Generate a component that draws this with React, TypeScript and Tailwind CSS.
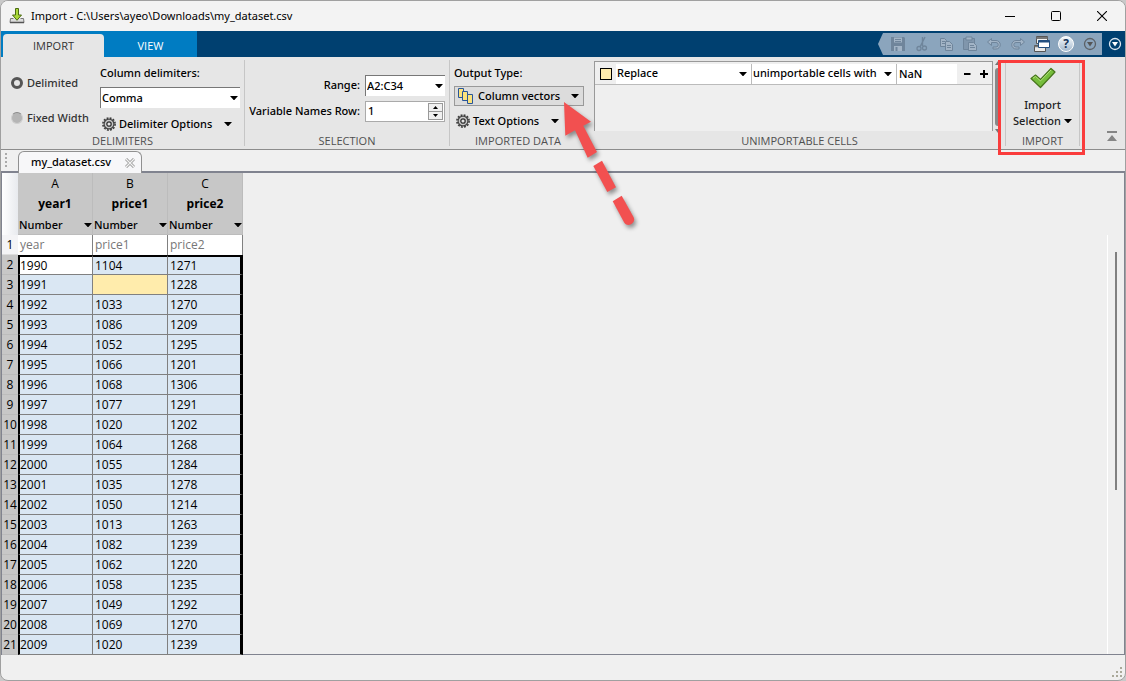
import React from "react";

const ROWS: [string, string, string][] = [
  ["1990", "1104", "1271"],
  ["1991", "", "1228"],
  ["1992", "1033", "1270"],
  ["1993", "1086", "1209"],
  ["1994", "1052", "1295"],
  ["1995", "1066", "1201"],
  ["1996", "1068", "1306"],
  ["1997", "1077", "1291"],
  ["1998", "1020", "1202"],
  ["1999", "1064", "1268"],
  ["2000", "1055", "1284"],
  ["2001", "1035", "1278"],
  ["2002", "1050", "1214"],
  ["2003", "1013", "1263"],
  ["2004", "1082", "1239"],
  ["2005", "1062", "1220"],
  ["2006", "1058", "1235"],
  ["2007", "1049", "1292"],
  ["2008", "1069", "1270"],
  ["2009", "1020", "1239"],
];

const COLUMNS = [
  { letter: "A", name: "year1", source: "year" },
  { letter: "B", name: "price1", source: "price1" },
  { letter: "C", name: "price2", source: "price2" },
];

function Caret({ className = "" }: { className?: string }) {
  return (
    <svg width="8" height="4" viewBox="0 0 8 4" className={"shrink-0 " + className} aria-hidden="true">
      <path d="M0 0h8L4 4.4z" fill="#000" />
    </svg>
  );
}

function Dropdown({
  id,
  label,
  value,
  className = "",
  caret = "right-0.5",
}: {
  id: string;
  label?: string;
  value: string;
  className?: string;
  caret?: string;
}) {
  return (
    <div className={"relative flex items-center text-[11px] " + className}>
      <select
        id={id}
        aria-label={label}
        className="h-full w-full appearance-none bg-transparent pl-px font-medium outline-none"
      >
        <option>{value}</option>
      </select>
      <Caret className={"pointer-events-none absolute " + caret} />
    </div>
  );
}

function Gear() {
  return (
    <svg width="14" height="14" viewBox="0 0 14 14" className="shrink-0" aria-hidden="true">
      <circle cx="7" cy="7" r="6.1" fill="none" stroke="#3c3c3c" strokeWidth="1.6" strokeDasharray="1.9 1.29" />
      <circle cx="7" cy="7" r="4.9" fill="#c8c8c8" stroke="#444" strokeWidth="1.2" />
      <circle cx="7" cy="7" r="2.2" fill="#e6e6e6" stroke="#333" strokeWidth="1.3" />
    </svg>
  );
}

function Section({
  title,
  className = "",
  children,
}: {
  title: string;
  className?: string;
  children: React.ReactNode;
}) {
  return (
    <section className={"flex flex-col " + className}>
      <div className="h-[76px]">{children}</div>
      <h2 className="text-center font-['Open_Sans',sans-serif] text-[11px] leading-4 font-normal text-[#505050]">{title}</h2>
    </section>
  );
}

function Divider() {
  return <div className="my-[3px] w-px shrink-0 bg-[#c6c6c6]" />;
}

function ToolIcon({ label, children }: { label: string; children: React.ReactNode }) {
  return (
    <button aria-label={label} className="flex size-4 items-center justify-center">
      <svg width="16" height="16" viewBox="0 0 16 16" fill="none" aria-hidden="true">
        {children}
      </svg>
    </button>
  );
}

function TitleBar() {
  return (
    <header className="flex h-[30px] shrink-0 items-center bg-[#f3f3f3] pl-2">
      <svg width="16" height="16" viewBox="0 0 16 16" aria-hidden="true">
        <path d="M1.5 10.5h3M11.5 10.5h3l.5 4H1l.5-4" fill="#ddd" stroke="#777" />
        <path d="M1 14.5h14" stroke="#555" strokeWidth="1.5" />
        <path d="M6.5.5h3V7h3L8 12.3 3.500 7h3z" fill="#a9d83a" stroke="#4b6b12" />
      </svg>
      <h1 className="ml-[6px] flex-1 text-[11px]">Import - C:\Users\ayeo\Downloads\my_dataset.csv</h1>
      <button aria-label="Minimize" className="flex h-full w-[46px] items-center justify-center">
        <svg width="10" height="10" viewBox="0 0 10 10"><path d="M0 5.500h10" stroke="#000" /></svg>
      </button>
      <button aria-label="Maximize" className="flex h-full w-[46px] items-center justify-center">
        <svg width="10" height="10" viewBox="0 0 10 10"><rect x=".5" y=".5" width="9" height="9" rx="1" fill="none" stroke="#000" /></svg>
      </button>
      <button aria-label="Close" className="flex h-full w-[46px] items-center justify-center">
        <svg width="10" height="10" viewBox="0 0 10 10"><path d="M0 0l10 10M10 0L0 10" stroke="#000" strokeWidth="1.1" /></svg>
      </button>
    </header>
  );
}

function RibbonTabs() {
  return (
    <nav className="flex h-[26px] shrink-0 bg-[#004070] font-['Open_Sans',sans-serif] text-[11px]">
      <div className="flex bg-[#007cc2] pl-0.5">
        <button className="mt-[3px] w-[101px] rounded-t-sm bg-[#e6e6e6] pt-px font-medium text-[#333]">IMPORT</button>
        <button className="w-[93px] pt-1 font-medium text-white">VIEW</button>
      </div>
      <div className="flex-1" />
      <div className="my-0.5 flex items-center">
        <svg width="8" height="22" viewBox="0 0 8 22" className="shrink-0" aria-hidden="true">
          <path d="M8 0H5L0 11l5 11h3z" fill="#8ba5bd" />
        </svg>
        <div className="flex h-full items-center gap-2 bg-[#8ba5bd] pl-1 pr-1">
          <ToolIcon label="Save">
            <path d="M1 1h13l1 1v13H1z" fill="#6f859b" />
            <path d="M4 1.500h8v5H4z" fill="#a2b4c6" />
            <path d="M5 3.500h6M5 5.500h6" stroke="#6f859b" />
            <path d="M4 10h8v5H4z" fill="#a2b4c6" />
            <path d="M5.500 11h2v4h-2z" fill="#6f859b" />
          </ToolIcon>
          <ToolIcon label="Cut">
            <path d="M11 1L6 11M8.500 1v9" stroke="#6f859b" strokeWidth="1.4" />
            <circle cx="5" cy="12.500" r="2" stroke="#6f859b" strokeWidth="1.3" />
            <circle cx="10.500" cy="12" r="2" stroke="#6f859b" strokeWidth="1.3" />
          </ToolIcon>
          <ToolIcon label="Copy">
            <path d="M2.500 2.500h4l2 2v6h-6z" fill="#a2b4c6" stroke="#6f859b" />
            <path d="M7.500 5.500h4l3 3v6h-7z" fill="#a2b4c6" stroke="#6f859b" />
            <path d="M4 5.500h3M4 7.500h3M9 9.500h4M9 11.500h4" stroke="#6f859b" />
          </ToolIcon>
          <ToolIcon label="Paste">
            <path d="M1.500 2.500h11v11h-11z" fill="#8096ac" stroke="#6f859b" />
            <path d="M4 1h6v3H4z" fill="#a2b4c6" stroke="#6f859b" />
            <path d="M6.500 6.500h5l3 3v5h-8z" fill="#a2b4c6" stroke="#6f859b" />
            <path d="M8 9.500h4M8 11.500h5" stroke="#6f859b" />
          </ToolIcon>
          <ToolIcon label="Undo">
            <path d="M1.500 6L5.500 2.500v2H10a4.200 4.200 0 0 1 0 8.500H7v-2h3a2.200 2.200 0 0 0 0-4.500H5.500v3z" fill="#a2b4c6" stroke="#6f859b" />
          </ToolIcon>
          <ToolIcon label="Redo">
            <path d="M14.500 6l-4-3.500v2H6A4.200 4.200 0 0 0 6 13h3v-2H6a2.200 2.200 0 0 1 0-4.500h4.500v3z" fill="#a2b4c6" stroke="#6f859b" />
          </ToolIcon>
          <ToolIcon label="Switch windows">
            <path d="M2.500.500h11v7h-11z" fill="#f4f4f4" stroke="#555" />
            <path d="M2.500 2h11" stroke="#777" strokeWidth="2" />
            <path d="M.5 9.500h11v6H.5z" fill="#e8e8e8" stroke="#555" />
            <path d="M.5 10.500h11" stroke="#777" strokeWidth="1.500" />
            <path d="M4.500 4.500h11v7h-11z" fill="#fff" stroke="#234f80" />
            <path d="M4.500 5.500h11" stroke="#234f80" strokeWidth="1.800" />
          </ToolIcon>
          <button
            aria-label="Help"
            className="flex size-4 items-center justify-center rounded-full border border-white bg-linear-to-b from-[#f4f8fb] to-[#a5bace] text-[12px] leading-none font-bold text-[#16365c]"
          >
            ?
          </button>
          <ToolIcon label="Quick access options">
            <circle cx="8" cy="8" r="5.500" stroke="#5c6166" strokeWidth="1.300" />
            <path d="M5 6h6l-3 4.500z" fill="#555" />
          </ToolIcon>
        </div>
      </div>
      <button aria-label="Customize" className="flex w-[23px] items-center justify-center pl-[3px]">
        <svg width="14" height="14" viewBox="0 0 14 14" aria-hidden="true">
          <circle cx="7" cy="7" r="5.500" fill="none" stroke="#dbe6ef" strokeWidth="1.300" />
          <path d="M4 5h6L7 9.500z" fill="#fff" />
        </svg>
      </button>
    </nav>
  );
}

function PointerArrow() {
  return (
    <svg
      width="84"
      height="134"
      viewBox="0 0 84 134"
      className="pointer-events-none absolute left-[108px] top-[12px] z-20 drop-shadow-[2px_3px_2px_rgba(0,0,0,0.4)]"
      aria-hidden="true"
    >
      <path d="M2 4L29 23.700l-7.700 4L35 54l-9.300 5.700L13 32.300l-9.700 5.400z" fill="#f25050" />
      <path d="M31.300 68l8.700-5.300L54 89.300 45.300 94z" fill="#f25050" />
      <path d="M50.700 103.300l9-5.600L71.500 119c3 6-5.500 11-9.200 5.700z" fill="#f25050" />
    </svg>
  );
}

function Ribbon() {
  return (
    <div className="flex h-[93px] shrink-0 border-b border-[#8c8c8c] bg-[#e6e6e6] text-[11px] font-medium">
      <Section title="DELIMITERS" className="w-[243px] shrink-0">
        <div className="flex">
          <div className="flex w-[99px] flex-col gap-[19px] pl-2.5 pt-[18px] text-[#333]">
            <label className="flex h-4 items-center gap-1 whitespace-nowrap">
              <input type="radio" name="layout" defaultChecked className="size-3 shrink-0 appearance-none rounded-full border-[3px] border-[#555] bg-[#e6e6e6]" />
              Delimited
            </label>
            <label className="flex h-4 items-center gap-1 whitespace-nowrap">
              <input type="radio" name="layout" className="size-3 shrink-0 appearance-none rounded-full border border-[#d0d0d0] border-t-[#8a8a8a] bg-[#b5b5b5]" />
              Fixed Width
            </label>
          </div>
          <div className="w-[140px] pt-2">
            <label htmlFor="delimiter" className="block h-4 leading-4">Column delimiters:</label>
            <Dropdown id="delimiter" value="Comma" className="mt-[6px] h-[21px] border-l border-t border-[#777] bg-white" />
            <button className="mt-2 flex h-4 w-full items-center pl-0.5">
              <Gear />
              <span className="ml-[3px]">Delimiter Options</span>
              <Caret className="ml-auto mr-2" />
            </button>
          </div>
        </div>
      </Section>
      <Divider />
      <Section title="SELECTION" className="w-[204px] shrink-0">
        <div className="flex flex-col gap-[5px] pr-1 pt-[18px]">
          <div className="flex items-center justify-end gap-[5px]">
            <label htmlFor="range">Range:</label>
            <Dropdown id="range" value="A2:C34" className="h-[21px] w-[80px] border-l border-t border-[#777] bg-white" />
          </div>
          <div className="flex items-center justify-end gap-[5px]">
            <label htmlFor="names-row" className="whitespace-nowrap">Variable Names Row:</label>
            <div className="flex h-[21px] w-[80px] border border-[#aaa] bg-white">
              <input id="names-row" defaultValue="1" className="min-w-0 flex-1 pl-0.5 outline-none" />
              <div className="flex w-[17px] flex-col p-px">
                <button aria-label="Increase" className="flex flex-1 items-center justify-center border border-[#999] bg-[#f0f0f0]">
                  <svg width="5" height="3" viewBox="0 0 5 3"><path d="M0 3h5L2.500 0z" /></svg>
                </button>
                <button aria-label="Decrease" className="flex flex-1 items-center justify-center border border-t-0 border-[#999] bg-[#f0f0f0]">
                  <svg width="5" height="3" viewBox="0 0 5 3"><path d="M0 0h5L2.500 3z" /></svg>
                </button>
              </div>
            </div>
          </div>
        </div>
      </Section>
      <Divider />
      <Section title="IMPORTED DATA" className="w-[136px] shrink-0">
        <div className="pl-1 pt-2">
          <label htmlFor="output-type" className="block h-4 leading-4">Output Type:</label>
          <div className="relative mt-[5px]">
            <button id="output-type" className="flex h-5 w-[130px] items-center border border-[#999] bg-[#dcdcdc] pl-[3px]">
              <svg width="16" height="16" viewBox="0 0 16 16" className="shrink-0" aria-hidden="true">
                <g fill="#fbe27c" stroke="#28569a">
                  <path d="M.5.500h5v9h-5z" />
                  <path d="M4.500 3.500h5v9h-5z" />
                  <path d="M9.500 6.500h5v9h-5z" />
                </g>
              </svg>
              <span className="ml-1 whitespace-nowrap">Column vectors</span>
              <Caret className="ml-auto mr-1" />
            </button>
            <PointerArrow />
          </div>
          <button className="mt-[7px] flex h-4 w-[105px] items-center pl-0.5">
            <Gear />
            <span className="ml-[3px] whitespace-nowrap">Text Options</span>
            <Caret className="ml-auto" />
          </button>
        </div>
      </Section>
      <Section title="UNIMPORTABLE CELLS" className="min-w-0 flex-1 pl-2">
        <div className="flex h-full gap-0.5 pr-1 pt-1">
          <div className="h-[70px] flex-1 border border-b-0 border-[#999] bg-[#efefef]">
            <div className="flex h-[23px] items-center border-b border-[#bbb] pt-px">
              <span className="ml-[5px] size-3 border border-black bg-[#ffecac]" />
              <Dropdown id="rule-action" label="Rule" value="Replace" caret="right-1" className="ml-1 h-5 flex-1 bg-white" />
              <Dropdown id="rule-target" label="Applies to" value="unimportable cells with" caret="right-1" className="h-5 w-[145px] border-l border-[#bbb] bg-white" />
              <input aria-label="Replacement value" defaultValue="NaN" className="h-5 w-[61px] border-l border-[#bbb] bg-white pl-0.5 outline-none" />
              <button aria-label="Remove rule" className="flex w-5 justify-center">
                <svg width="7" height="9" viewBox="0 0 7 9"><path d="M0 5h6.500" stroke="#000" strokeWidth="2" /></svg>
              </button>
              <button aria-label="Add rule" className="flex w-[15px] justify-center">
                <svg width="9" height="9" viewBox="0 0 9 9"><path d="M0 5h8M4 1v8" stroke="#000" strokeWidth="2" /></svg>
              </button>
            </div>
          </div>
          <div className="flex w-[6px] flex-col items-center">
            <svg width="6" height="4" viewBox="0 0 6 4"><path d="M0 4h6L3 0z" fill="#777" /></svg>
            <div className="my-[3px] w-1.5 flex-1 rounded bg-[#888]" />
            <svg width="6" height="4" viewBox="0 0 6 4"><path d="M0 0h6L3 4z" fill="#777" /></svg>
          </div>
        </div>
      </Section>
      <Divider />
      <div className="relative flex">
        <Section title="IMPORT" className="w-[73px] shrink-0">
          <button className="flex w-full flex-col items-center pt-2 leading-4 text-[#222]">
            <svg width="26" height="24" viewBox="0 0 26 24" aria-hidden="true">
              <path d="M1 13.500l4.500-3.500 5 4.500L21 3.500l4 3.500L10.500 22.500z" fill="#76bd3c" stroke="#47751c" strokeWidth="1.200" strokeLinejoin="round" />
              <path d="M3 13.200l2.500-1.800 5 4.500L21 5" fill="none" stroke="#b5e27f" />
            </svg>
            <span className="mt-2">Import</span>
            <span className="flex items-center gap-[3px]">
              Selection <Caret />
            </span>
          </button>
        </Section>
        <div className="pointer-events-none absolute -left-2 -right-1.5 -bottom-1.5 top-[3px] z-10 border-[3px] border-[#fa3c3c]" />
      </div>
      <Divider />
      <div className="flex w-[45px] shrink-0 items-end justify-center pb-2 pl-[19px]">
        <button aria-label="Collapse ribbon">
          <svg width="10" height="10" viewBox="0 0 10 10" aria-hidden="true">
            <path d="M0 0h10v2H0zM0 10h10L5 4z" fill="#858585" />
          </svg>
        </button>
      </div>
    </div>
  );
}

function FileTabs() {
  return (
    <div className="flex h-[23px] shrink-0 items-end border-b-2 border-[#80838f] bg-[#f0f0f0]">
      <div className="mb-1 ml-1 h-[14px] w-[2px] border-l-2 border-dotted border-[#aaa]" />
      <div className="-mb-0.5 ml-[11px] flex h-[22px] w-[124px] items-center rounded-t-md border border-b-0 border-[#909090] bg-[#f7f7f9] pl-3 text-[11px] font-medium">
        <span>my_dataset.csv</span>
        <button aria-label="Close file" className="ml-auto mr-[6px]">
          <svg width="10" height="10" viewBox="0 0 10 10" fill="none" aria-hidden="true">
            <path d="M1 1l8 8M9 1L1 9" stroke="#999" strokeWidth="3" />
            <path d="M1 1l8 8M9 1L1 9" stroke="#f3f3f3" strokeWidth="1.200" />
          </svg>
        </button>
      </div>
    </div>
  );
}

function DataGrid() {
  return (
    <table className="-mb-px w-[241px] table-fixed border-separate border-spacing-0 font-['Open_Sans',sans-serif] leading-4">
      <colgroup>
        <col className="w-4" />
        <col className="w-[75px]" />
        <col className="w-[75px]" />
        <col className="w-[75px]" />
      </colgroup>
      <thead>
        <tr className="h-[62px]">
          <td className="bg-linear-to-r from-white to-[#e8eaee]" />
          {COLUMNS.map((c) => (
            <th key={c.letter} scope="col" className="border-r border-b border-r-[#bcbcbc] border-b-[#bcbcbc] bg-[#c7c7c7] p-0 align-top font-normal">
              <div className="mt-[3px] h-4">{c.letter}</div>
              <div className="mt-1 h-4 font-bold">{c.name}</div>
              <Dropdown
                id={"type-" + c.letter}
                label={c.name + " type"}
                value="Number"
                caret="right-0"
                className="mt-[5px] h-4 text-left font-['Noto_Sans',sans-serif]"
              />
            </th>
          ))}
        </tr>
      </thead>
      <tbody>
        <tr className="h-5">
          <th scope="row" className="border-b border-[#ddd] bg-[#f4f4f6] p-0 text-center font-normal">1</th>
          {COLUMNS.map((c) => (
            <td key={c.letter} className="border-r border-[#808080] bg-white p-0 pl-0.5 text-[#777]">{c.source}</td>
          ))}
        </tr>
        {ROWS.map((row, i) => (
          <tr key={i} className="h-5">
            <th scope="row" className="border-b border-[#bcbcbc] bg-[#c7c7c7] p-0 font-normal">
              <div className="flex justify-center">{i + 2}</div>
            </th>
            {row.map((cell, j) => (
              <td
                key={j}
                className={[
                  "border-b border-b-[#808080] p-0",
                  j === 0 ? "border-l-2 border-l-black border-r border-r-[#808080]" : "pl-0.5",
                  j === 1 ? "border-r border-r-[#808080]" : "",
                  j === 2 ? "border-r-[3px] border-r-black" : "",
                  i === 0 ? "border-t-2 border-t-black" : "",
                  i === 0 && j === 0 ? "bg-white" : cell === "" ? "bg-[#ffecac]" : "bg-[#dae7f3]",
                ].join(" ")}
              >
                {cell}
              </td>
            ))}
          </tr>
        ))}
      </tbody>
    </table>
  );
}

export default function App() {
  return (
    <div className="min-h-screen bg-[#c9c9c9] font-['Noto_Sans',sans-serif] text-[12px] text-black">
      <div className="flex min-h-screen flex-col overflow-hidden rounded-lg border border-[#a0a0a0] bg-[#f0f0f0]">
        <TitleBar />
        <RibbonTabs />
        <Ribbon />
        <FileTabs />
        <main className="flex min-h-0 flex-1 border-x border-b border-[#80838f] bg-[#efefef]">
          <DataGrid />
          <div className="flex-1" />
          <div className="mt-[62px] flex w-[17px] border-l border-white">
            <div className="ml-[7px] mt-[17px] h-[238px] w-0.5 bg-[#808080]" />
          </div>
        </main>
        <footer className="flex h-[25px] shrink-0 items-end justify-end pb-0.5 pr-0.5">
          <svg width="11" height="11" viewBox="0 0 11 11" fill="#aaa99a" aria-hidden="true">
            <path d="M8 0h2v2H8zM4 4h2v2H4zM8 4h2v2H8zM0 8h2v2H0zM4 8h2v2H4zM8 8h2v2H8z" />
          </svg>
        </footer>
      </div>
    </div>
  );
}
